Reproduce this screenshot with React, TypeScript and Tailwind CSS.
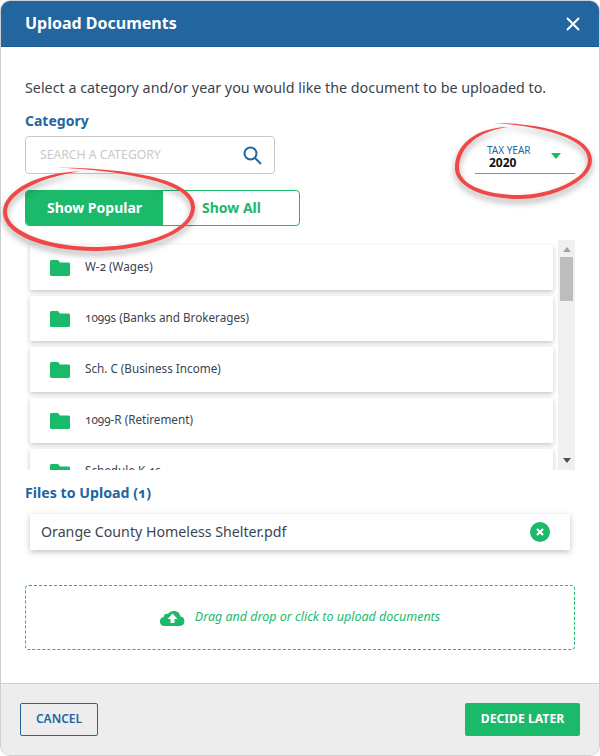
import React from "react";

const items = ["W-2 (Wages)", "1099s (Banks and Brokerages)", "Sch. C (Business Income)", "1099-R (Retirement)", "Schedule K-1s"];

function Folder() {
  return (
    <svg width="20" height="16" viewBox="0 0 20 16" className="shrink-0">
      <path d="M0 1.500C0 .7.7 0 1.500 0H8l2 2.500h8.500c.8 0 1.500.7 1.500 1.500v10.500c0 .8-.7 1.500-1.500 1.500h-17C.7 16 0 15.300 0 14.500z" fill="#1bb96a" />
    </svg>
  );
}

export default function App() {
  return (
    <div className="relative w-[600px] h-[756px] bg-white overflow-hidden font-['Noto_Sans',sans-serif]">
      <div className="flex flex-col h-full bg-white rounded-[10px] border border-[#cfcfcf] overflow-hidden">
        <header className="h-[46px] shrink-0 bg-[#23659f] border-b border-[#1d5a90] flex items-center justify-between pl-[24px] pr-[18px]">
          <h1 className="text-[16px] font-bold text-white pb-0.5">Upload Documents</h1>
          <svg width="16" height="16" viewBox="0 0 16 16" stroke="white" strokeWidth="2" fill="none">
            <path d="M2 2l12 12M14 2L2 14" />
          </svg>
        </header>
        <main className="flex-1 flex flex-col pl-[24px] pr-[24px] min-h-0">
          <p className="mt-[31px] text-[14.300px] leading-5 text-[#3a4450]">Select a category and/or year you would like the document to be uploaded to.</p>
          <div className="flex justify-between">
            <div className="w-[250px]">
              <div className="mt-[13px] text-[14px] leading-[20px] font-bold text-[#23659f]">Category</div>
              <div className="mt-[5px] h-[38px] border border-[#c8c8c8] rounded flex items-center justify-between pl-[14px] pr-3">
                <span className="text-[12.200px] text-[#c9c9c9]">SEARCH A CATEGORY</span>
                <svg width="19" height="19" viewBox="0 0 19 19" fill="none" stroke="#23659f" strokeWidth="2">
                  <circle cx="7.500" cy="7.500" r="6" />
                  <path d="M12 12l6 6" />
                </svg>
              </div>
            </div>
            <div className="w-[100px] mt-[43px] h-[33px] border-b border-[#8a8a8a] flex justify-between pl-3 pr-[14px] pt-[3px]">
              <div className="flex flex-col">
                <span className="text-[10px] leading-[12px] text-[#23659f]">TAX YEAR</span>
                <span className="text-[12px] leading-[13px] font-bold pl-0.5 text-[#111]">2020</span>
              </div>
              <svg width="10" height="6" viewBox="0 0 10 6" className="mt-[9px]">
                <path d="M0 0h10L5 6z" fill="#1bb96a" />
              </svg>
            </div>
          </div>
          <div className="mt-4 w-[275px] h-9 flex rounded border border-[#1bb96a] text-[14px] font-bold">
            <div className="w-[137px] bg-[#1bb96a] text-white flex items-center justify-center rounded-l-[3px] pb-0.5">Show Popular</div>
            <div className="flex-1 text-[#1bb96a] flex items-center pl-[39px] pb-0.5">Show All</div>
          </div>
          <div className="mt-[14px] h-[230px] flex shrink-0">
            <div className="w-[533px] overflow-hidden pl-[5px] pr-[5px] pt-[5px] flex flex-col gap-[6px]">
              {items.map((t) => (
                <div key={t} className="h-[45px] shrink-0 bg-white shadow-[0_2px_5px_rgba(0,0,0,0.22)] flex items-center pl-5 gap-[15px] text-[11.700px] text-[#3a4450] oldstyle-nums">
                  <Folder />
                  <span className="pb-0.5">{t}</span>
                </div>
              ))}
            </div>
            <div className="w-[17px] bg-[#f0f0f0] flex flex-col items-center">
              <svg width="8" height="5" viewBox="0 0 8 5" className="mt-[7px]"><path d="M0 5h8L4 0z" fill="#a3a3a3" /></svg>
              <div className="mt-[5px] w-[13px] h-11 bg-[#bdbdbd]" />
              <svg width="8" height="5" viewBox="0 0 8 5" className="mt-auto mb-[7px]"><path d="M0 0h8L4 5z" fill="#505050" /></svg>
            </div>
          </div>
          <div className="mt-[13px] text-[14.200px] leading-5 font-bold text-[#23659f] oldstyle-nums">Files to Upload (1)</div>
          <div className="mt-[11px] ml-[5px] mr-[5px] h-9 bg-white shadow-[0_2px_6px_rgba(0,0,0,0.25)] flex items-center justify-between pl-[11px] pr-5 text-[14.200px] text-[#3a4450]">
            <span>Orange County Homeless Shelter.pdf</span>
            <svg width="20" height="20" viewBox="0 0 20 20">
              <circle cx="10" cy="10" r="10" fill="#1bb96a" />
              <path d="M7 7l6 6M13 7l-6 6" stroke="white" strokeWidth="2.200" />
            </svg>
          </div>
          <div className="mt-[35px] h-[65px] border border-dashed border-[#1bb96a] rounded flex items-center justify-center gap-[10px] text-[12.500px] italic text-[#1bb96a]">
            <svg width="25" height="17" viewBox="0 0 25 17">
              <path d="M4.500 17A4.500 4.500 0 0 1 3.500 8.100 4 4 0 0 1 8 4.800 7 7 0 0 1 20.500 7.500 4.800 4.800 0 0 1 20 17z" fill="#1bb96a" />
              <path d="M12.500 4.500l5 5.500h-3v4h-4v-4h-3z" fill="white" />
            </svg>
            <span>Drag and drop or click to upload documents</span>
          </div>
        </main>
        <footer className="h-[72px] shrink-0 bg-[#ededed] border-t border-[#cfcfcf] flex items-center justify-between pl-[19px] pr-[19px]">
          <div className="w-[78px] h-[33px] mt-[-1px] border border-[#23659f] rounded-[2px] flex items-center justify-center text-[12px] font-semibold text-[#23659f]">CANCEL</div>
          <div className="w-[115px] h-[33px] mt-[-1px] bg-[#1bb96a] rounded-[2px] flex items-center justify-center text-[12.200px] font-bold text-white">DECIDE LATER</div>
        </footer>
      </div>
      <svg className="absolute inset-0 pointer-events-none" width="600" height="756" viewBox="0 0 600 756" fill="#f04848" style={{ filter: "drop-shadow(0 4px 3px rgba(0,0,0,0.35))" }}>
        <path d="M57 167.500C110 168 195 175 195 207C195 235 140 251 95 251C45 251 3 235 3 212C3 190 40 172 80 171.500C45 176 7 192 7 212C7 232 50 247 95 247C140 247 191 232 191 207C191 180 110 170 57 167.500Z" />
        <path d="M493 123C540 123 592 135 592 160C592 182 550 199 520 199C480 199 455 185 455 168C455 145 475 128 508 127C478 131 459 147 459 168C459 183 482 195 520 195C548 195 588 180 588 160C588 138 540 126 493 123Z" />
      </svg>
    </div>
  );
}
